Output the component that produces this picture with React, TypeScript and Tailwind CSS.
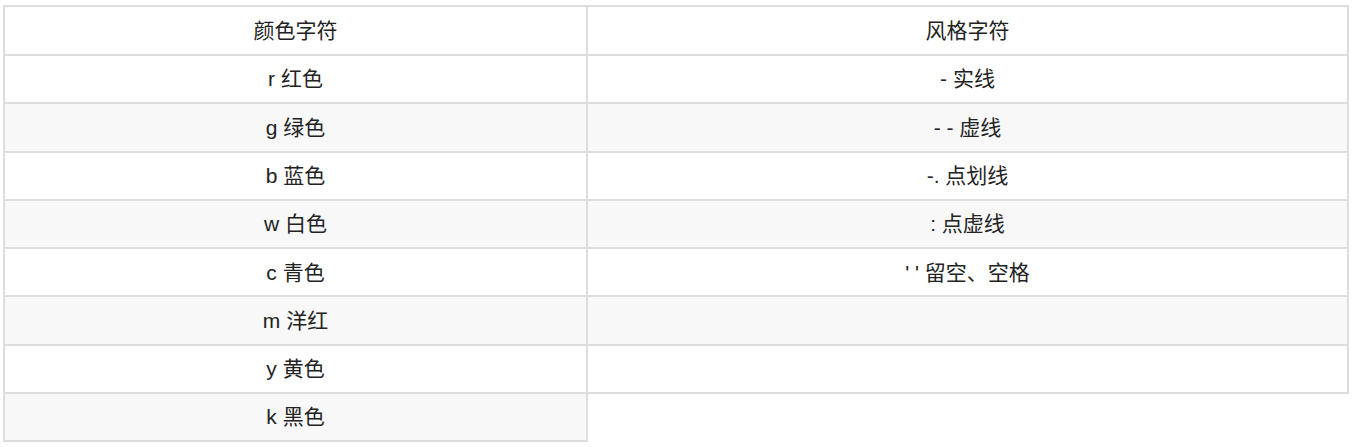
import { Fragment } from 'react';

const rows: [string, string | null][] = [
  ['r 红色', '- 实线'],
  ['g 绿色', '- - 虚线'],
  ['b 蓝色', '-. 点划线'],
  ['w 白色', ': 点虚线'],
  ['c 青色', "' ' 留空、空格"],
  ['m 洋红', ''],
  ['y 黄色', ''],
  ['k 黑色', null],
];

export default function App() {
  return (
    <div className="min-h-screen bg-white pt-[5px] pl-[3px] font-['Liberation_Sans','Noto_Sans_CJK_SC',sans-serif] text-[21px] text-[#222]">
      <div className="grid grid-cols-[585px_761px]">
        <div className="flex h-[51px] items-center justify-center border-2 border-[#ddd] bg-white">颜色字符</div>
        <div className="flex h-[51px] items-center justify-center border-y-2 border-r-2 border-[#ddd] bg-white">风格字符</div>
        {rows.map(([color, style], i) => {
          const bg = i % 2 === 1 ? 'bg-[#f8f8f8]' : 'bg-white';
          return (
            <Fragment key={i}>
              <div className={`flex h-[48.3px] items-center justify-center border-x-2 border-b-2 border-[#ddd] ${bg}`}>
                {color}
              </div>
              {style !== null && (
                <div className={`flex h-[48.3px] items-center justify-center border-r-2 border-b-2 border-[#ddd] ${bg}`}>
                  {style}
                </div>
              )}
            </Fragment>
          );
        })}
      </div>
    </div>
  );
}
